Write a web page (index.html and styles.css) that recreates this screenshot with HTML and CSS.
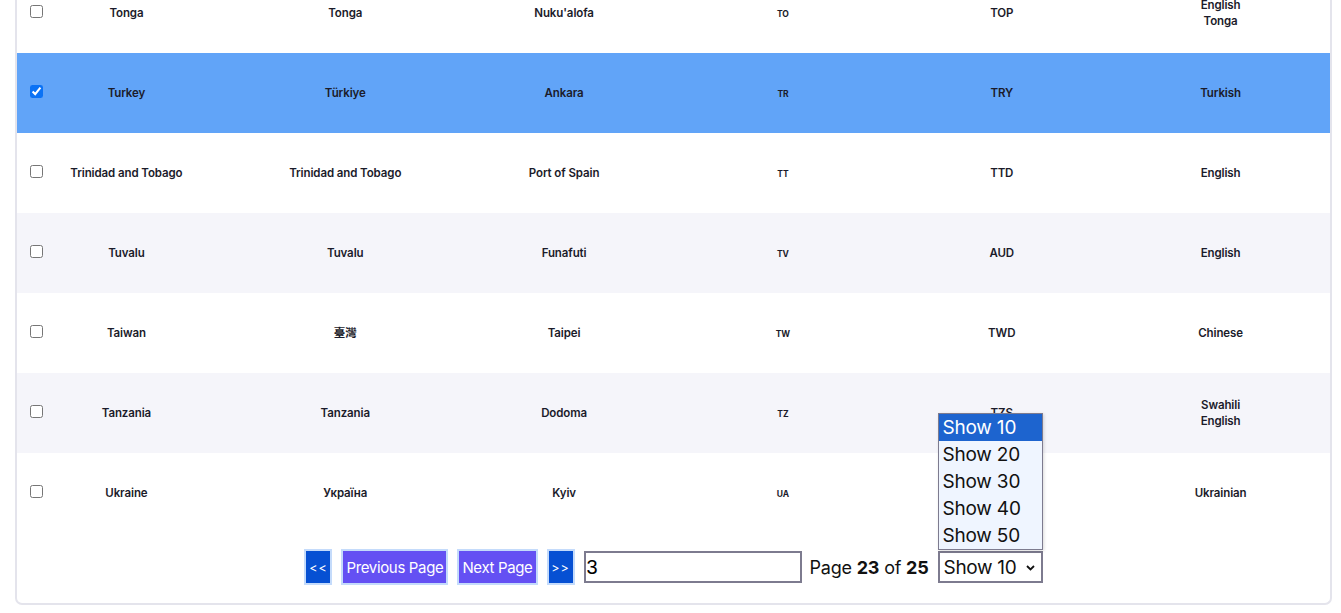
FILE: index.html
```html
<!DOCTYPE html>
<html>
<head>
<meta charset="utf-8">
<link rel="stylesheet" href="styles.css">
</head>
<body>
<div class="card">
  <div class="table">
    <div class="row">
      <input type="checkbox" class="check">
      <div class="cell">Tonga</div>
      <div class="cell">Tonga</div>
      <div class="cell">Nuku'alofa</div>
      <div class="cell code">TO</div>
      <div class="cell">TOP</div>
      <div class="cell">English<br>Tonga</div>
    </div>
    <div class="row selected">
      <input type="checkbox" class="check" checked>
      <div class="cell">Turkey</div>
      <div class="cell">Türkiye</div>
      <div class="cell">Ankara</div>
      <div class="cell code">TR</div>
      <div class="cell">TRY</div>
      <div class="cell">Turkish</div>
    </div>
    <div class="row">
      <input type="checkbox" class="check">
      <div class="cell">Trinidad and Tobago</div>
      <div class="cell">Trinidad and Tobago</div>
      <div class="cell">Port of Spain</div>
      <div class="cell code">TT</div>
      <div class="cell">TTD</div>
      <div class="cell">English</div>
    </div>
    <div class="row stripe">
      <input type="checkbox" class="check">
      <div class="cell">Tuvalu</div>
      <div class="cell">Tuvalu</div>
      <div class="cell">Funafuti</div>
      <div class="cell code">TV</div>
      <div class="cell">AUD</div>
      <div class="cell">English</div>
    </div>
    <div class="row">
      <input type="checkbox" class="check">
      <div class="cell">Taiwan</div>
      <div class="cell">臺灣</div>
      <div class="cell">Taipei</div>
      <div class="cell code">TW</div>
      <div class="cell">TWD</div>
      <div class="cell">Chinese</div>
    </div>
    <div class="row stripe">
      <input type="checkbox" class="check">
      <div class="cell">Tanzania</div>
      <div class="cell">Tanzania</div>
      <div class="cell">Dodoma</div>
      <div class="cell code">TZ</div>
      <div class="cell">TZS</div>
      <div class="cell">Swahili<br>English</div>
    </div>
    <div class="row">
      <input type="checkbox" class="check">
      <div class="cell">Ukraine</div>
      <div class="cell">Україна</div>
      <div class="cell">Kyiv</div>
      <div class="cell code">UA</div>
      <div class="cell">UAH</div>
      <div class="cell">Ukrainian</div>
    </div>
  </div>
  <div class="pager">
    <button class="btn btn-edge">&lt;&lt;</button>
    <button class="btn btn-page">Previous Page</button>
    <button class="btn btn-page">Next Page</button>
    <button class="btn btn-edge">&gt;&gt;</button>
    <input class="page-input" type="text" value="3">
    <span class="page-info">Page <b>23</b> of <b>25</b></span>
    <div class="select-wrap">
      <div class="select">Show 10 <svg class="chev" width="9" height="6" viewBox="0 0 9 6"><path d="M1 1l3.5 3.5L8 1" fill="none" stroke="#111" stroke-width="1.8"/></svg></div>
      <ul class="options">
        <li class="opt active">Show 10</li>
        <li class="opt">Show 20</li>
        <li class="opt">Show 30</li>
        <li class="opt">Show 40</li>
        <li class="opt">Show 50</li>
      </ul>
    </div>
  </div>
</div>
</body>
</html>
```

FILE: styles.css
```css
* { box-sizing: border-box; }
html, body { margin: 0; padding: 0; background: #ffffff; }
body {
  font-family: Inter, "Noto Sans", "Noto Sans CJK TC", sans-serif;
  color: #1b1b2a;
  overflow: hidden;
  height: 613px;
}
.card {
  margin: -27px 9px 0 15px;
  border: 2px solid #e4e4ec;
  border-top: none;
  border-radius: 0 0 7px 7px;
  background: #fff;
}
.table { display: flex; flex-direction: column; }
.row {
  position: relative;
  display: grid;
  grid-template-columns: repeat(6, 1fr);
  height: 80px;
  align-items: center;
  background: #fff;
}
.row.stripe { background: #f5f5fa; }
.row.selected { background: #61a4f8; }
.cell {
  text-align: center;
  font-size: 11.5px;
  font-weight: 600;
  line-height: 16px;
  letter-spacing: -0.1px;
}
.cell.code { font-size: 8.5px; font-weight: 700; padding-top: 2px; }
.check {
  position: absolute;
  left: 13px;
  top: 32px;
  width: 13px;
  height: 13px;
  margin: 0;
  accent-color: #0b72f5;
}
.pager {
  display: flex;
  justify-content: center;
  align-items: center;
  gap: 9px;
  padding: 16px 0 18px;
}
.btn {
  font-family: inherit;
  color: #fff;
  font-size: 15px;
  height: 36px;
  border: 2px solid #c4dbfb;
  padding: 0 3px;
  cursor: pointer;
  letter-spacing: -0.35px;
}
.btn-edge { background: #0650d3; width: 28px; font-size: 12.5px; letter-spacing: 1px; padding: 0; }
.btn-page { background: #6450f3; }
.page-input {
  width: 218px;
  height: 32px;
  border: 2px solid #7d7b8f;
  font-family: "Liberation Sans", Arial, sans-serif;
  font-size: 20px;
  padding: 0 1px;
  color: #000;
  outline: none;
}
.page-info { font-size: 18px; color: #111; margin-left: -1px; letter-spacing: -0.2px; }
.page-info b { font-weight: 700; }
.select-wrap { position: relative; }
.select {
  width: 105px;
  height: 32px;
  border: 2px solid #7d7b8f;
  font-size: 19px;
  padding: 0 6px 0 4px;
  display: flex;
  align-items: center;
  justify-content: space-between;
  background: #fff;
  color: #111;
  letter-spacing: -0.3px;
}
.chev { margin-top: 2px; }
.options {
  position: absolute;
  left: 0;
  bottom: 33px;
  width: 105px;
  margin: 0;
  padding: 0;
  list-style: none;
  border: 1px solid #7d7b8f;
  background: #eff5ff;
  box-shadow: 1px 1px 3px rgba(0,0,0,0.15);
}
.opt {
  height: 27px;
  line-height: 27px;
  font-size: 19px;
  padding-left: 4px;
  color: #111;
  letter-spacing: -0.2px;
}
.opt.active { background: #1d64cf; color: #fff; }
```
